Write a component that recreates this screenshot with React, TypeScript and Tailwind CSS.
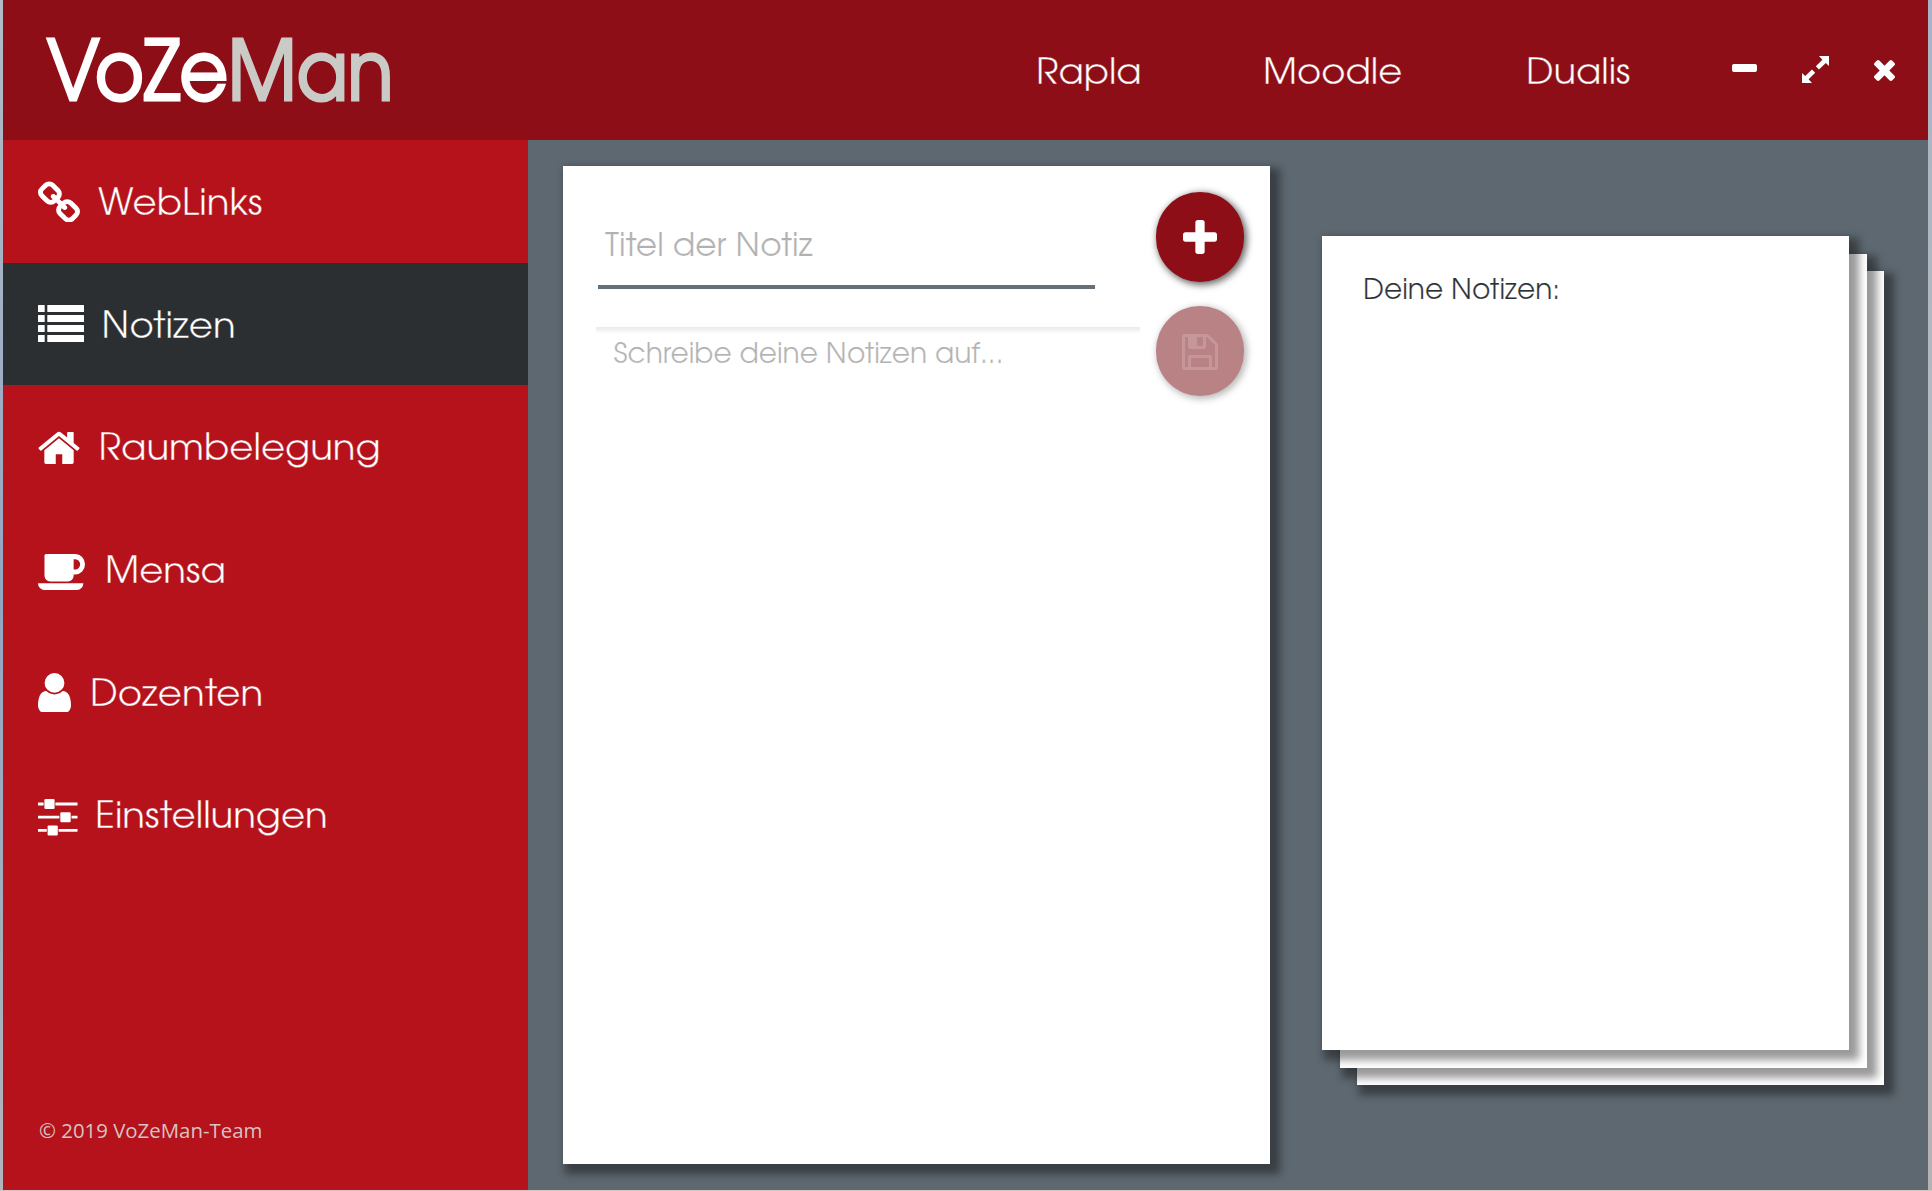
import type { ReactNode } from 'react';

const gothic = 'font-["TeX_Gyre_Adventor","Century_Gothic",Lato,sans-serif]';

const paths = {
  link: 'M1520 1216q0-40-28-68l-208-208q-28-28-68-28-42 0-72 32 3 3 19 18.5t21.5 21.5 15 19 13 25.5 3.5 27.5q0 40-28 68t-68 28q-15 0-27.5-3.5t-25.5-13-19-15-21.5-21.5-18.5-19q-33 31-33 73 0 40 28 68l206 207q27 27 68 27 40 0 68-26l147-146q28-28 28-67zm-703-705q0-40-28-68l-206-207q-28-28-68-28-39 0-68 27l-147 146q-28 28-28 67 0 40 28 68l208 208q27 27 68 27 42 0 72-31-3-3-19-18.5t-21.5-21.5-15-19-13-25.5-3.5-27.5q0-40 28-68t68-28q15 0 27.5 3.5t25.5 13 19 15 21.5 21.5 18.5 19q33-31 33-73zm895 705q0 120-85 203l-147 146q-83 83-203 83-121 0-204-85l-206-207q-83-83-83-203 0-123 88-209l-88-88q-86 88-208 88-120 0-204-84l-208-208q-84-84-84-204t85-203l147-146q83-83 203-83 121 0 204 85l206 207q83 83 83 203 0 123-88 209l88 88q86-88 208-88 120 0 204 84l208 208q84 84 84 204z',
  home: 'M1472 992v480q0 26-19 45t-45 19h-384v-384h-256v384h-384q-26 0-45-19t-19-45v-480q0-1 .5-3t.5-3l575-474 575 474q1 2 1 6zm223-69l-62 74q-8 9-21 11h-3q-13 0-21-7l-692-577-692 577q-12 8-24 7-13-2-21-11l-62-74q-8-10-7-23.5t11-21.5l719-599q32-26 76-26t76 26l244 204v-195q0-14 9-23t23-9h192q14 0 23 9t9 23v408l219 182q10 8 11 21.5t-7 23.5z',
  coffee:
    'M1664 704q0-80-56-136t-136-56h-64v384h64q80 0 136-56t56-136zm-1664 704h1792q0 106-75 181t-181 75h-1280q-106 0-181-75t-75-181zm1856-704q0 159-112.5 271.5t-271.5 112.5h-64v32q0 92-66 158t-158 66h-704q-92 0-158-66t-66-158v-736q0-26 19-45t45-19h1152q159 0 271.5 112.5t112.5 271.5z',
  user: 'M1536 1399q0 109-62.5 187t-150.5 78h-854q-88 0-150.5-78t-62.5-187q0-85 8.5-160.5t31.5-152 58.5-131 94-89 134.5-34.5q131 128 313 128t313-128q76 0 134.5 34.5t94 89 58.5 131 31.5 152 8.5 160.5zm-256-887q0 159-112.5 271.5t-271.5 112.5-271.5-112.5-112.5-271.5 112.5-271.5 271.5-112.5 271.5 112.5 112.5 271.5z',
  times:
    'M1490 1322q0 40-28 68l-136 136q-28 28-68 28t-68-28l-294-294-294 294q-28 28-68 28t-68-28l-136-136q-28-28-28-68t28-68l294-294-294-294q-28-28-28-68t28-68l136-136q28-28 68-28t68 28l294 294 294-294q28-28 68-28t68 28l136 136q28 28 28 68t-28 68l-294 294 294 294q28 28 28 68z',
  plus: 'M1600 736v192q0 40-28 68t-68 28h-416v416q0 40-28 68t-68 28h-192q-40 0-68-28t-28-68v-416h-416q-40 0-68-28t-28-68v-192q0-40 28-68t68-28h416v-416q0-40 28-68t68-28h192q40 0 68 28t28 68v416h416q40 0 68 28t28 68z',
  save: 'M512 1536h768v-384h-768v384zm896 0h128v-896q0-14-10-38.5t-20-34.5l-281-281q-10-10-34-20t-39-10v416q0 40-28 68t-68 28h-576q-40 0-68-28t-28-68v-416h-128v1280h128v-416q0-40 28-68t68-28h832q40 0 68 28t28 68v416zm-384-928v-320q0-13-9.5-22.5t-22.5-9.5h-192q-13 0-22.5 9.5t-9.5 22.5v320q0 13 9.5 22.5t22.5 9.5h192q13 0 22.5-9.5t9.5-22.5zm640 32v928q0 40-28 68t-68 28h-1344q-40 0-68-28t-28-68v-1344q0-40 28-68t68-28h928q40 0 88 20t76 48l280 280q28 28 48 76t20 88z',
};

function Glyph({ d, box, className }: { d: string; box: string; className: string }) {
  return (
    <svg viewBox={box} preserveAspectRatio="none" className={`block shrink-0 ${className}`} fill="currentColor">
      <path d={d} />
    </svg>
  );
}

function ListIcon() {
  return (
    <svg viewBox="0 0 46 37" className="block h-[37px] w-[46px]" fill="currentColor">
      {[0, 10, 20, 30].map((y) => (
        <g key={y}>
          <rect x="0" y={y} width="6.7" height="7" rx="0.5" />
          <rect x="9.3" y={y} width="36.7" height="7" rx="0.5" />
        </g>
      ))}
    </svg>
  );
}

function SlidersIcon() {
  return (
    <svg viewBox="0 0 39.5 37" className="mt-1.5 block h-[37px] w-[39.5px]" fill="currentColor">
      <path d="M0 3.6h5.6v2.8H0zM17.4 3.6h22.1v2.8H17.4zM0 16.8h21.4v2.8H0zM33.5 16.8h6v2.8h-6zM0 30h8.8v2.8H0zM20.6 30h18.9v2.8H20.6z" />
      <rect x="6.4" y="0" width="10.2" height="10" rx="1.2" />
      <rect x="22.3" y="13.2" width="10.4" height="10" rx="1.2" />
      <rect x="9.6" y="26.4" width="10.2" height="10" rx="1.2" />
    </svg>
  );
}

interface Item {
  label: string;
  icon: ReactNode;
  slot: string;
  active?: boolean;
}

const items: Item[] = [
  { label: 'WebLinks', slot: 'w-[60px]', icon: <Glyph d={paths.link} box="80 0 1632 1648" className="h-[41.5px] w-[42px]" /> },
  { label: 'Notizen', slot: 'w-[63.5px]', icon: <ListIcon />, active: true },
  { label: 'Raumbelegung', slot: 'w-[60.5px]', icon: <Glyph d={paths.home} box="71 220 1650 1316" className="mt-0.5 h-[33px] w-[42px]" /> },
  { label: 'Mensa', slot: 'w-[67px]', icon: <Glyph d={paths.coffee} box="0 320 1856 1344" className="mt-1.5 h-[36px] w-[47px]" /> },
  { label: 'Dozenten', slot: 'w-[52px]', icon: <Glyph d={paths.user} box="256 128 1280 1536" className="mt-0.5 h-[39.5px] w-[33px]" /> },
  { label: 'Einstellungen', slot: 'w-[57px]', icon: <SlidersIcon /> },
];

const paperShadow = 'shadow-[6px_6px_8px_4px_rgba(0,0,0,0.4)]';

export default function App() {
  return (
    <div className={`flex h-[1191px] w-[1932px] flex-col overflow-hidden bg-[#cfc8c4] ${gothic}`}>
      <div className="flex h-[1190px]">
        <div className="w-[3px] bg-linear-to-b from-[#b3bcc6] via-[#93a6c2] to-[#b0b5ba]" />
        <div className="flex w-[1925px] flex-col">
          <header className="flex h-[140px] shrink-0 bg-[#8e0e17] text-white">
            <h1 className="w-[1033px] pt-[20px] pl-[44px] text-[82px] leading-[116px] font-normal whitespace-nowrap">
              <span className="inline-block origin-left scale-x-[0.91] [-webkit-text-stroke:3px_currentColor]">
                VoZe<span className="text-[#cacac6]">Man</span>
              </span>
            </h1>
            <nav className="flex pt-[46px] text-[37px] leading-[56px] [-webkit-text-stroke:0.3px_#8e0e17]">
              <a className="w-[227px]">Rapla</a>
              <a className="w-[263px]">Moodle</a>
              <a className="w-[206px]">Dualis</a>
            </nav>
            <div className="flex h-[140px] items-center">
              <span className="mb-1 block h-2 w-[25px] rounded-[2px] bg-white" />
              <svg viewBox="0 0 27 27" className="mb-px ml-[45px] block size-[27px]" fill="currentColor">
                <path d="M17 0H27V10L23.8 6.9L17 13.4L13.8 10.2L20.4 3.7ZM10 27H0V17L3.2 20.1L10 13.6L13.2 16.8L6.6 23.3Z" />
              </svg>
              <Glyph d={paths.times} box="302 366 1188 1188" className="mt-px ml-[45px] size-[21px]" />
            </div>
          </header>
          <div className="flex flex-1">
            <aside className="flex w-[525px] flex-col justify-between bg-[#b5121b] text-white">
              <nav>
                {items.map((item) => (
                  <a
                    key={item.label}
                    className={`flex h-[122.6px] items-center pl-[35px] ${
                      item.active
                        ? 'bg-[#2c2f32] [-webkit-text-stroke:0.3px_#2c2f32]'
                        : '[-webkit-text-stroke:0.3px_#b5121b]'
                    }`}
                  >
                    <span className={`shrink-0 ${item.slot}`}>{item.icon}</span>
                    <span className="pt-[8px] text-[37.2px] leading-[56px]">{item.label}</span>
                  </a>
                ))}
              </nav>
              <p className='pb-[46px] pl-[36px] font-["Open_Sans",sans-serif] text-[20.4px] leading-[28px] text-[#d6c3c3]'>
                © 2019 VoZeMan-Team
              </p>
            </aside>
            <main className="flex flex-1 items-start bg-[#5e6870] pt-[26px] pl-[35px]">
              <section className={`flex h-[998px] w-[707px] bg-white pl-[33px] ${paperShadow}`}>
                <div className="w-[560px] pt-[52px] text-[#b1b1b1]">
                  <div className="ml-[2px] h-[71px] w-[497px] border-b-4 border-[#65717a] pt-[3px] pl-[7px] text-[32.8px] leading-[52px] [-webkit-text-stroke:0.2px_#fff]">
                    Titel der Notiz
                  </div>
                  <div className="mt-[38px] h-[7px] w-[544px] bg-linear-to-b from-[#e9e9e9] to-white" />
                  <div className="pt-px pl-[17.5px] text-[28.1px] leading-[40px] [-webkit-text-stroke:0.2px_#fff]">
                    Schreibe deine Notizen auf...
                  </div>
                </div>
                <div className="flex flex-col gap-6 pt-[26px]">
                  <button className="flex h-[90px] w-[88px] items-center justify-center rounded-full bg-[#8e0e17] text-white shadow-[2px_2px_7px_1px_rgba(0,0,0,0.6)]">
                    <Glyph d={paths.plus} box="192 128 1408 1408" className="size-[34px]" />
                  </button>
                  <button className="flex h-[90px] w-[88px] items-center justify-center rounded-full bg-[#b98386] text-[#c5969a] shadow-[2px_2px_7px_1px_rgba(0,0,0,0.28)]">
                    <Glyph d={paths.save} box="128 128 1536 1536" className="mt-px size-[36px]" />
                  </button>
                </div>
              </section>
              <section className="relative mt-[70px] ml-[52px] h-[814px] w-[527px]">
                <div className={`absolute top-[35px] left-[35px] h-full w-full bg-white ${paperShadow}`} />
                <div className={`absolute top-[18px] left-[18px] h-full w-full bg-white ${paperShadow}`} />
                <div
                  className={`relative h-full w-full bg-white pt-[35px] pl-[41px] text-[28.1px] leading-[40px] text-[#2c2f32] [-webkit-text-stroke:0.2px_#fff] ${paperShadow}`}
                >
                  Deine Notizen:
                </div>
              </section>
            </main>
          </div>
        </div>
        <div className="w-1 bg-linear-to-b from-[#a7b3c4] via-[#b9bcc0] to-[#b5b1b1]" />
      </div>
    </div>
  );
}
